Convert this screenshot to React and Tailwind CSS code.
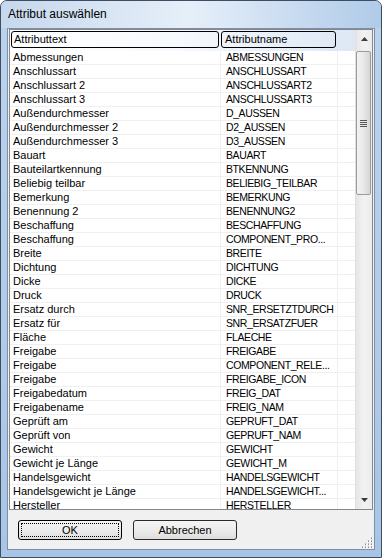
import React from "react";

const rows = [
  ["Abmessungen", "ABMESSUNGEN"],
  ["Anschlussart", "ANSCHLUSSART"],
  ["Anschlussart 2", "ANSCHLUSSART2"],
  ["Anschlussart 3", "ANSCHLUSSART3"],
  ["Außendurchmesser", "D_AUSSEN"],
  ["Außendurchmesser 2", "D2_AUSSEN"],
  ["Außendurchmesser 3", "D3_AUSSEN"],
  ["Bauart", "BAUART"],
  ["Bauteilartkennung", "BTKENNUNG"],
  ["Beliebig teilbar", "BELIEBIG_TEILBAR"],
  ["Bemerkung", "BEMERKUNG"],
  ["Benennung 2", "BENENNUNG2"],
  ["Beschaffung", "BESCHAFFUNG"],
  ["Beschaffung", "COMPONENT_PRO..."],
  ["Breite", "BREITE"],
  ["Dichtung", "DICHTUNG"],
  ["Dicke", "DICKE"],
  ["Druck", "DRUCK"],
  ["Ersatz durch", "SNR_ERSETZTDURCH"],
  ["Ersatz für", "SNR_ERSATZFUER"],
  ["Fläche", "FLAECHE"],
  ["Freigabe", "FREIGABE"],
  ["Freigabe", "COMPONENT_RELE..."],
  ["Freigabe", "FREIGABE_ICON"],
  ["Freigabedatum", "FREIG_DAT"],
  ["Freigabename", "FREIG_NAM"],
  ["Geprüft am", "GEPRUFT_DAT"],
  ["Geprüft von", "GEPRUFT_NAM"],
  ["Gewicht", "GEWICHT"],
  ["Gewicht je Länge", "GEWICHT_M"],
  ["Handelsgewicht", "HANDELSGEWICHT"],
  ["Handelsgewicht je Länge", "HANDELSGEWICHT..."],
  ["Hersteller", "HERSTELLER"],
];

const font = "font-['Liberation_Sans',Arial,sans-serif]";

const Scrollbar = () => (
  <div className="w-[17px] flex flex-col bg-linear-to-r from-[#e6e6e6] via-[#f2f2f2] to-[#ececec] border-l border-[#e0e0e0]">
    <div className="h-[18px] flex items-center justify-center">
      <svg width="7" height="4" viewBox="0 0 7 4">
        <path d="M0 4 L3.5 0 L7 4 Z" fill="#3d3d3d" />
      </svg>
    </div>
    <div className="h-[3px]" />
    <div className="mr-[1px] h-[144px] rounded-[2px] border border-[#9b9b9b] bg-linear-to-r from-[#f3f3f3] via-[#e8e8e8] to-[#d6d6d6] flex flex-col items-center justify-center gap-[1px]">
      <div className="w-[7px] h-[1px] bg-[#555]" />
      <div className="w-[7px] h-[1px] bg-[#555]" />
      <div className="w-[7px] h-[1px] bg-[#555]" />
      <div className="w-[7px] h-[1px] bg-[#555]" />
    </div>
    <div className="flex-1" />
    <div className="h-[18px] flex items-center justify-center">
      <svg width="7" height="4" viewBox="0 0 7 4">
        <path d="M0 0 L7 0 L3.5 4 Z" fill="#3d3d3d" />
      </svg>
    </div>
  </div>
);

const Button = ({ label, focused }) => (
  <button
    className={`relative w-[104px] h-[20px] rounded-[3px] border ${
      focused ? "border-[#000]" : "border-[#2a2a2a]"
    } bg-linear-to-b from-[#f4f4f4] via-[#ececec] to-[#dedede] text-[11px] text-black leading-none ${font}`}
  >
    {focused && (
      <span className="absolute inset-[2px] border border-dotted border-black rounded-[1px]" />
    )}
    {label}
  </button>
);

export default function App() {
  return (
    <div className={`w-[382px] h-[558px] rounded-t-[7px] border border-[#3d4d63] bg-linear-to-b from-[#bcd3ec] to-[#a9c5e5] flex flex-col px-[6px] ${font}`}>
      <div className="h-[27px] -mx-[6px] px-[7px] rounded-t-[6px] flex items-center bg-linear-to-r from-[#c6d8ec] via-[#e6eff9] to-[#b0cbe8]">
        <span className="text-[12px] text-black pb-[1px]">Attribut auswählen</span>
      </div>
      <div className="border border-[#7d8fa6] bg-[#f0f0f0] flex flex-col h-[522px]">
        <div className="mx-[1px] h-[481px] border border-[#828790] bg-white flex overflow-hidden">
          <div className="flex-1 flex flex-col overflow-hidden">
            <div className="h-[21px] shrink-0 flex pt-[1px] bg-linear-to-r from-white via-[#f6f9fd] to-[#dde8f5]">
              <div className="w-[211px] pl-[1px] pr-[2px]">
                <div className="h-[17px] border border-black rounded-[3px] pl-[2px] text-[11px] leading-[15px] text-black">
                  Attributtext
                </div>
              </div>
              <div className="w-[117px] pr-[2px]">
                <div className="h-[17px] border border-black rounded-[3px] pl-[3px] text-[11px] leading-[15px] text-black">
                  Attributname
                </div>
              </div>
              <div className="flex-1" />
            </div>
            {rows.map(([text, name], i) => (
              <div key={i} className="h-[14px] shrink-0 flex border-b border-[#f0f0f0] text-[11px] leading-[13px] text-black">
                <div className="w-[211px] pl-[3px] border-r border-[#f0f0f0] whitespace-nowrap overflow-hidden">{text}</div>
                <div className="w-[117px] pl-[5px] border-r border-[#f0f0f0] whitespace-nowrap overflow-hidden text-[10.5px] tracking-[-0.4px]">{name}</div>
                <div className="flex-1" />
              </div>
            ))}
          </div>
          <Scrollbar />
        </div>
        <div className="flex-1 flex items-start gap-[11px] pl-[10px] pt-[10px] relative">
          <Button label="OK" focused />
          <Button label="Abbrechen" />
          <svg className="absolute right-[1px] bottom-[1px]" width="11" height="11" viewBox="0 0 11 11">
            {[[9, 1], [9, 4], [9, 7], [6, 4], [6, 7], [3, 7], [9, 10], [6, 10], [3, 10], [0, 10]].map(([x, y], k) => (
              <g key={k}>
                <rect x={x} y={y - 1} width="1" height="1" fill="#b8b8b8" />
                <rect x={x + 1} y={y} width="1" height="1" fill="#fff" />
                <rect x={x} y={y} width="1" height="1" fill="#8a8a8a" />
              </g>
            ))}
          </svg>
        </div>
      </div>
    </div>
  );
}
